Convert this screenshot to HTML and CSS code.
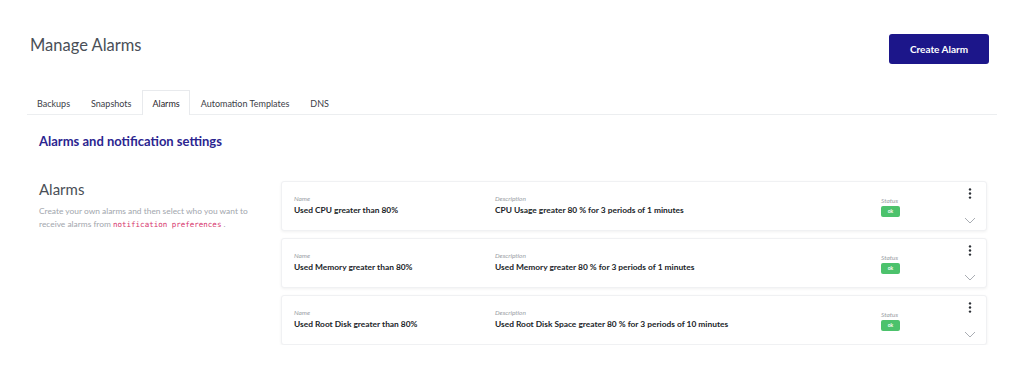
FILE: index.html
```html
<!DOCTYPE html>
<html lang="en">
<head>
    <meta charset="UTF-8">
    <meta name="viewport" content="width=device-width, initial-scale=1.0">
    <title>Manage Alarms</title>
    <link rel="stylesheet" href="styles.css">
</head>
<body>
    <div class="page">
        <div class="page-header">
            <h1>Manage Alarms</h1>
            <button class="btn-primary">Create Alarm</button>
        </div>

        <!-- Tabs -->
        <ul class="tabs">
            <li>Backups</li>
            <li>Snapshots</li>
            <li class="active">Alarms</li>
            <li>Automation Templates</li>
            <li>DNS</li>
        </ul>

        <h2 class="section-title">Alarms and notification settings</h2>

        <div class="settings">
            <div class="settings-info">
                <h3>Alarms</h3>
                <p>Create your own alarms and then select who you want to receive alarms from <code>notification preferences</code>&nbsp;.</p>
            </div>

            <div class="alarm-list">
                <div class="alarm-card">
                    <div class="col col-name">
                        <span class="label">Name</span>
                        <span class="value">Used CPU greater than 80%</span>
                    </div>
                    <div class="col col-desc">
                        <span class="label">Description</span>
                        <span class="value">CPU Usage greater 80 % for 3 periods of 1 minutes</span>
                    </div>
                    <div class="col col-status">
                        <span class="label">Status</span>
                        <span class="badge">ok</span>
                    </div>
                    <div class="actions">
                        <svg class="kebab" width="4" height="11" viewBox="0 0 4 11"><circle cx="2" cy="1.4" r="1.2"/><circle cx="2" cy="5.5" r="1.2"/><circle cx="2" cy="9.6" r="1.2"/></svg>
                        <svg class="chevron" width="12" height="7" viewBox="0 0 12 7"><path d="M1 1l5 5 5-5"/></svg>
                    </div>
                </div>

                <div class="alarm-card">
                    <div class="col col-name">
                        <span class="label">Name</span>
                        <span class="value">Used Memory greater than 80%</span>
                    </div>
                    <div class="col col-desc">
                        <span class="label">Description</span>
                        <span class="value">Used Memory greater 80 % for 3 periods of 1 minutes</span>
                    </div>
                    <div class="col col-status">
                        <span class="label">Status</span>
                        <span class="badge">ok</span>
                    </div>
                    <div class="actions">
                        <svg class="kebab" width="4" height="11" viewBox="0 0 4 11"><circle cx="2" cy="1.4" r="1.2"/><circle cx="2" cy="5.5" r="1.2"/><circle cx="2" cy="9.6" r="1.2"/></svg>
                        <svg class="chevron" width="12" height="7" viewBox="0 0 12 7"><path d="M1 1l5 5 5-5"/></svg>
                    </div>
                </div>

                <div class="alarm-card">
                    <div class="col col-name">
                        <span class="label">Name</span>
                        <span class="value">Used Root Disk greater than 80%</span>
                    </div>
                    <div class="col col-desc">
                        <span class="label">Description</span>
                        <span class="value">Used Root Disk Space greater 80 % for 3 periods of 10 minutes</span>
                    </div>
                    <div class="col col-status">
                        <span class="label">Status</span>
                        <span class="badge">ok</span>
                    </div>
                    <div class="actions">
                        <svg class="kebab" width="4" height="11" viewBox="0 0 4 11"><circle cx="2" cy="1.4" r="1.2"/><circle cx="2" cy="5.5" r="1.2"/><circle cx="2" cy="9.6" r="1.2"/></svg>
                        <svg class="chevron" width="12" height="7" viewBox="0 0 12 7"><path d="M1 1l5 5 5-5"/></svg>
                    </div>
                </div>
            </div>
        </div>
    </div>
</body>
</html>
```

FILE: styles.css
```css
body {
    margin: 0;
    background: #fff;
    font-family: 'Lato', 'Noto Sans', sans-serif;
    color: #1f2328;
}
.page {
    padding: 34px 35px 0 27px;
}
.page-header {
    display: flex;
    justify-content: space-between;
    align-items: flex-start;
}
.page-header h1 {
    margin: 1px 0 0 3px;
    font-size: 16.5px;
    font-weight: 400;
    color: #4a4f57;
}
.btn-primary {
    width: 100px;
    height: 30px;
    border: none;
    border-radius: 3px;
    background: #1c168a;
    color: #fff;
    font-family: inherit;
    font-size: 10px;
    font-weight: 700;
}
.tabs {
    display: flex;
    list-style: none;
    margin: 26px -8px 0 0;
    padding: 0;
    border-bottom: 1px solid #eceef0;
}
.tabs li {
    padding: 7px 9px 6px;
    font-size: 9px;
    color: #3c4047;
    border: 1px solid transparent;
    border-bottom: none;
    margin-bottom: -1px;
}
.tabs li + li {
    margin-left: 1px;
}
.tabs li.active {
    border-color: #e8eaed;
    background: #fff;
    color: #1f2328;
}
.section-title {
    margin: 18px 0 0 12px;
    font-size: 13px;
    font-weight: 700;
    color: #2b2590;
}
.settings {
    display: flex;
    margin-top: 30px;
}
.settings-info {
    width: 230px;
    padding: 1px 0 0 12px;
    flex-shrink: 0;
}
.settings-info h3 {
    margin: 0;
    font-size: 15px;
    font-weight: 400;
    color: #4a4f57;
}
.settings-info p {
    margin: 7px 0 0;
    font-size: 8.4px;
    line-height: 13px;
    color: #a2a6ad;
}
.settings-info code {
    font-family: 'DejaVu Sans Mono', monospace;
    font-size: 7.5px;
    color: #d6336c;
}
.alarm-list {
    display: flex;
    flex-direction: column;
    gap: 7px;
    margin: 2px 0 0 12px;
    width: 706px;
}
.alarm-card {
    display: flex;
    height: 50px;
    box-sizing: border-box;
    padding: 13px 12px 0;
    background: #fff;
    border: 1px solid #f0f1f3;
    border-radius: 3px;
    box-shadow: 0 1px 3px rgba(0, 0, 0, 0.06);
    position: relative;
}
.col {
    display: flex;
    flex-direction: column;
}
.col-name {
    width: 201px;
}
.col-desc {
    width: 386px;
}
.col-status {
    padding-top: 2px;
}
.label {
    font-size: 6.5px;
    font-style: italic;
    color: #9a9ea5;
}
.value {
    margin-top: 3px;
    font-size: 8.4px;
    font-weight: 700;
    color: #202428;
}
.badge {
    margin-top: 2px;
    width: 19px;
    height: 11px;
    border-radius: 2px;
    background: #4cc26c;
    color: #fff;
    font-size: 5px;
    font-weight: 700;
    text-align: center;
    line-height: 11px;
}
.actions {
    position: absolute;
    right: 10px;
    top: 6px;
    display: flex;
    flex-direction: column;
    align-items: center;
    gap: 18px;
}
.kebab {
    fill: #2b2f35;
}
.chevron {
    fill: none;
    stroke: #a9adb3;
    stroke-width: 1;
}
```
